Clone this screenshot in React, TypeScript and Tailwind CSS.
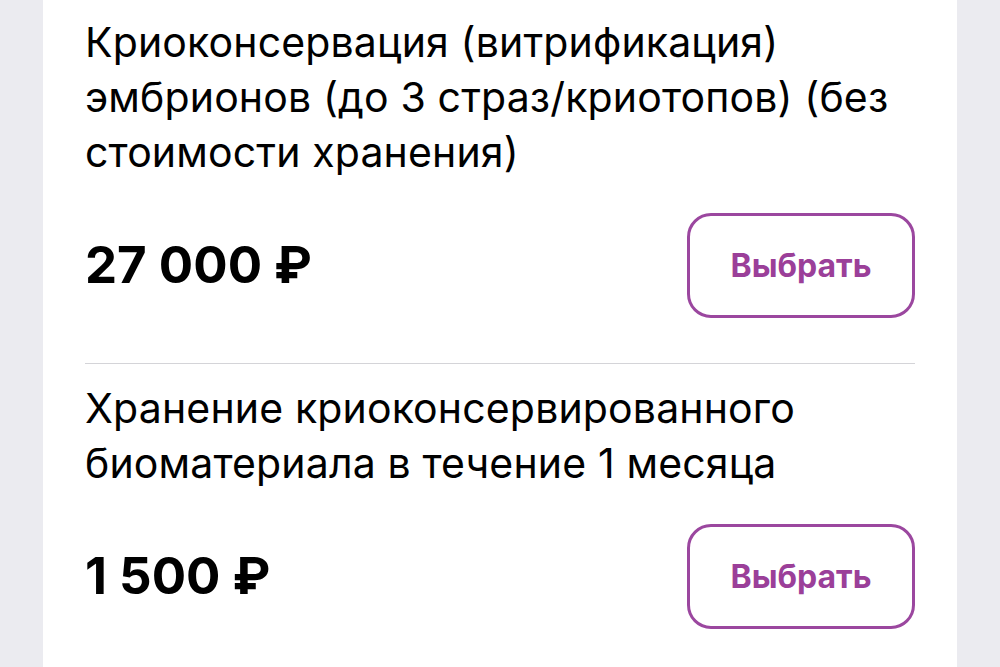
const services = [
  {
    title: "Криоконсервация (витрификация) эмбрионов (до 3 страз/криотопов) (без стоимости хранения)",
    price: "27 000 ₽",
  },
  {
    title: "Хранение криоконсервированного биоматериала в течение 1 месяца",
    price: "1 500 ₽",
  },
];

export default function App() {
  return (
    <div className="min-h-screen bg-[#ebebf0] px-[43px] font-['Inter',sans-serif]">
      <div className="bg-white px-[42px] pt-[15px] min-h-[667px]">
        {services.map((s, i) => (
          <div
            key={s.title}
            className={`${i === 0 ? "border-b border-[#d4d4d8] pb-[45px] mb-[17px]" : ""}`}
          >
            <p className="text-[41px] leading-[55px] text-black tracking-[0.15px]">{s.title}</p>
            <div className="flex items-center justify-between mt-[33px]">
              <span className="text-[51px] font-bold text-black">{s.price}</span>
              <button className="w-[228px] h-[105px] rounded-[24px] border-[3px] border-[#9b479f] text-[#9b3f99] text-[32px] font-bold">
                Выбрать
              </button>
            </div>
          </div>
        ))}
      </div>
    </div>
  );
}
